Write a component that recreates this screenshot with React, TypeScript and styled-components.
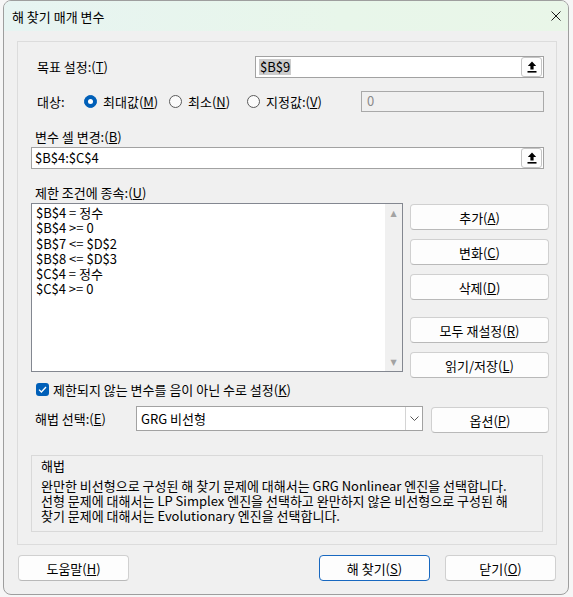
import React from 'react'
import styled, { createGlobalStyle } from 'styled-components'

const GlobalStyle = createGlobalStyle`
  html, body {
    margin: 0;
    padding: 0;
    background: #f6f6f6;
  }
  body {
    font-family: 'Noto Sans CJK KR', 'Noto Sans', sans-serif;
    font-size: 13px;
    color: #000;
  }
`

const constraints = ['$B$4 = 정수', '$B$4 >= 0', '$B$7 <= $D$2', '$B$8 <= $D$3', '$C$4 = 정수', '$C$4 >= 0']

function UpArrow() {
  return (
    <svg width='10' height='12' viewBox='0 0 10 12'>
      <path d='M5 0.5 L0.8 5 H3.4 V8.5 H6.6 V5 H9.2 Z' fill='#000' />
      <rect x='0.5' y='10' width='9' height='1.6' fill='#000' />
    </svg>
  )
}

function CloseIcon() {
  return (
    <svg width='10' height='10' viewBox='0 0 10 10'>
      <path d='M0.5 0.5 L9.5 9.5 M9.5 0.5 L0.5 9.5' stroke='#1a1a1a' strokeWidth='1' />
    </svg>
  )
}

function Chevron() {
  return (
    <svg width='9' height='5' viewBox='0 0 9 5'>
      <path d='M0.5 0.5 L4.5 4.5 L8.5 0.5' stroke='#555' strokeWidth='1' fill='none' />
    </svg>
  )
}

function Check() {
  return (
    <svg width='9' height='7' viewBox='0 0 9 7'>
      <path d='M1 3.6 L3.4 6 L8 1' stroke='#fff' strokeWidth='1.3' fill='none' />
    </svg>
  )
}

export default function App() {
  return (
    <>
      <GlobalStyle />
      <Window>
        <TitleBar>
          <Title>해 찾기 매개 변수</Title>
          <CloseButton>
            <CloseIcon />
          </CloseButton>
        </TitleBar>
        <Body>
          <Panel>
            <TargetRow>
              <TargetLabel>
                목표 설정:(<u>T</u>)
              </TargetLabel>
              <RefInput>
                <Selected>$B$9</Selected>
                <RefButton>
                  <UpArrow />
                </RefButton>
              </RefInput>
            </TargetRow>

            <ObjectiveRow>
              <ObjectiveLabel>대상:</ObjectiveLabel>
              <RadioOption $w={85}>
                <RadioDot $checked />
                <span>
                  최대값(<u>M</u>)
                </span>
              </RadioOption>
              <RadioOption $w={78}>
                <RadioDot />
                <span>
                  최소(<u>N</u>)
                </span>
              </RadioOption>
              <RadioOption $w={113}>
                <RadioDot />
                <span>
                  지정값:(<u>V</u>)
                </span>
              </RadioOption>
              <ValueInput>0</ValueInput>
            </ObjectiveRow>

            <FieldLabel $top={17}>
              변수 셀 변경:(<u>B</u>)
            </FieldLabel>
            <WideRow>
              <RefInput>
                <span>$B$4:$C$4</span>
                <RefButton>
                  <UpArrow />
                </RefButton>
              </RefInput>
            </WideRow>

            <FieldLabel $top={16}>
              제한 조건에 종속:(<u>U</u>)
            </FieldLabel>
            <ConstraintArea>
              <ListBox>
                <ListItems>
                  {constraints.map((c) => (
                    <ListItem key={c}>{c}</ListItem>
                  ))}
                </ListItems>
                <ScrollTrack>
                  <ScrollArrow>▲</ScrollArrow>
                  <ScrollArrow>▼</ScrollArrow>
                </ScrollTrack>
              </ListBox>
              <ButtonColumn>
                <Button $w={139}>
                  추가(<u>A</u>)
                </Button>
                <Button $w={139} $top={9}>
                  변화(<u>C</u>)
                </Button>
                <Button $w={139} $top={9}>
                  삭제(<u>D</u>)
                </Button>
                <Button $w={139} $top={17}>
                  모두 재설정(<u>R</u>)
                </Button>
                <Button $w={139} $top={9}>
                  읽기/저장(<u>L</u>)
                </Button>
              </ButtonColumn>
            </ConstraintArea>

            <CheckRow>
              <CheckBox>
                <Check />
              </CheckBox>
              <span>
                제한되지 않는 변수를 음이 아닌 수로 설정(<u>K</u>)
              </span>
            </CheckRow>

            <SolverRow>
              <SolverLabel>
                해법 선택:(<u>E</u>)
              </SolverLabel>
              <Select>
                <SelectText>GRG 비선형</SelectText>
                <SelectArrow>
                  <Chevron />
                </SelectArrow>
              </Select>
              <Button $w={118} $top={1}>
                옵션(<u>P</u>)
              </Button>
            </SolverRow>

            <GroupBox>
              <GroupTitle>해법</GroupTitle>
              <GroupText>
                <TextLine>완만한 비선형으로 구성된 해 찾기 문제에 대해서는 GRG Nonlinear 엔진을 선택합니다.</TextLine>
                <TextLine>선형 문제에 대해서는 LP Simplex 엔진을 선택하고 완만하지 않은 비선형으로 구성된 해</TextLine>
                <TextLine>찾기 문제에 대해서는 Evolutionary 엔진을 선택합니다.</TextLine>
              </GroupText>
            </GroupBox>
          </Panel>

          <Footer>
            <Button $w={111}>
              도움말(<u>H</u>)
            </Button>
            <Spacer />
            <Button $w={111} $primary>
              해 찾기(<u>S</u>)
            </Button>
            <Button $w={111}>
              닫기(<u>O</u>)
            </Button>
          </Footer>
        </Body>
      </Window>
    </>
  )
}

const Window = styled.div`
  margin-left: 3px;
  width: 566px;
  height: 595px;
  box-sizing: border-box;
  border: 1px solid #9e9e9e;
  border-radius: 8px;
  background: #f0f0f0;
  overflow: hidden;
  display: flex;
  flex-direction: column;
`

const TitleBar = styled.div`
  height: 30px;
  display: flex;
  align-items: center;
  padding: 0 7px 0 8px;
  background: linear-gradient(90deg, #e7f4f2, #e8f6ea 60%, #e9f6e8);
`

const Title = styled.div`
  flex: 1;
  line-height: 16px;
  margin-top: 1px;
`

const CloseButton = styled.div`
  width: 10px;
  height: 10px;
  display: flex;
`

const Body = styled.div`
  flex: 1;
  padding: 10px 0 0 13px;
  display: flex;
  flex-direction: column;
`

const Panel = styled.div`
  width: 540px;
  height: 504px;
  box-sizing: border-box;
  border: 1px solid #dcdcdc;
  padding: 14px 7px 0 13px;
  display: flex;
  flex-direction: column;
`

const TargetRow = styled.div`
  display: flex;
  height: 22px;
  margin-right: 5px;
`

const TargetLabel = styled.div`
  width: 224px;
  padding-left: 6px;
  box-sizing: border-box;
  line-height: 22px;
`

const RefInput = styled.div`
  flex: 1;
  height: 22px;
  box-sizing: border-box;
  border: 1px solid #a2a2a2;
  background: #fff;
  display: flex;
  align-items: center;
  padding: 0 1px 0 3px;
  line-height: 16px;

  & > span {
    flex: 1;
  }
`

const Selected = styled.span`
  flex: 0 0 auto !important;
  margin-right: auto;
  background: #cccccc;
  padding: 0 1px;
`

const RefButton = styled.div`
  width: 21px;
  height: 20px;
  box-sizing: border-box;
  border: 1px solid #c4c4c4;
  border-radius: 3px;
  background: #fdfdfd;
  display: flex;
  align-items: center;
  justify-content: center;
  margin-left: auto;
`

const ObjectiveRow = styled.div`
  display: flex;
  align-items: center;
  height: 21px;
  margin-top: 13px;
  margin-right: 5px;
`

const ObjectiveLabel = styled.div`
  width: 53px;
  padding-left: 6px;
  box-sizing: border-box;
`

const RadioOption = styled.label<{ $w: number }>`
  width: ${(p) => p.$w}px;
  display: flex;
  align-items: center;
  gap: 6px;
  white-space: nowrap;
`

const RadioDot = styled.span<{ $checked?: boolean }>`
  width: 13px;
  height: 13px;
  box-sizing: border-box;
  border-radius: 50%;
  flex: 0 0 auto;
  position: relative;
  border: 1px solid ${(p) => (p.$checked ? '#005fb8' : '#5a5a5a')};
  background: ${(p) => (p.$checked ? '#005fb8' : '#fbfbfb')};

  &::after {
    content: '';
    display: ${(p) => (p.$checked ? 'block' : 'none')};
    position: absolute;
    left: 3px;
    top: 3px;
    width: 5px;
    height: 5px;
    border-radius: 50%;
    background: #fff;
  }
`

const ValueInput = styled.div`
  margin-left: auto;
  width: 183px;
  height: 21px;
  box-sizing: border-box;
  border: 1px solid #a9a9a9;
  background: #f0f0f0;
  color: #8a8a8a;
  padding-left: 5px;
  line-height: 18px;
`

const FieldLabel = styled.div<{ $top: number }>`
  margin-top: ${(p) => p.$top}px;
  line-height: 16px;
  padding-left: 4px;
`

const WideRow = styled.div`
  display: flex;
  margin-top: 2px;
  margin-right: 5px;
`

const ConstraintArea = styled.div`
  display: flex;
  align-items: flex-start;
  gap: 7px;
  margin-top: 2px;
`

const ListBox = styled.div`
  width: 372px;
  height: 169px;
  box-sizing: border-box;
  border: 1px solid #838790;
  background: #fff;
  display: flex;
`

const ListItems = styled.div`
  flex: 1;
  padding: 1px 4px;
`

const ListItem = styled.div`
  line-height: 15.3px;
  white-space: nowrap;
`

const ScrollTrack = styled.div`
  width: 17px;
  background: #f0f0f0;
  display: flex;
  flex-direction: column;
  justify-content: space-between;
  align-items: center;
  padding: 5px 0 3px;
`

const ScrollArrow = styled.span`
  font-family: 'DejaVu Sans', sans-serif;
  font-size: 8px;
  line-height: 10px;
  color: #a3a3a3;
`

const ButtonColumn = styled.div`
  display: flex;
  flex-direction: column;
  margin-top: 1px;
`

const Button = styled.div<{ $w: number; $top?: number; $primary?: boolean }>`
  width: ${(p) => p.$w}px;
  height: 26px;
  margin-top: ${(p) => p.$top ?? 0}px;
  box-sizing: border-box;
  border: 1px solid ${(p) => (p.$primary ? '#1868c0' : '#d0d0d0')};
  border-bottom-color: ${(p) => (p.$primary ? '#1868c0' : '#b9b9b9')};
  border-radius: 4px;
  background: #fdfdfd;
  display: flex;
  align-items: center;
  justify-content: center;
  white-space: nowrap;
  flex: 0 0 auto;
`

const CheckRow = styled.div`
  display: flex;
  align-items: center;
  height: 16px;
  margin-top: 3px;
  padding-left: 5px;
  gap: 4px;
  white-space: nowrap;
`

const CheckBox = styled.span`
  width: 13px;
  height: 13px;
  border-radius: 3px;
  background: #005fb8;
  display: flex;
  align-items: center;
  justify-content: center;
`

const SolverRow = styled.div`
  display: flex;
  align-items: flex-start;
  margin-top: 9px;
  gap: 8px;
`

const SolverLabel = styled.div`
  width: 97px;
  padding-left: 4px;
  box-sizing: border-box;
  line-height: 25px;
`

const Select = styled.div`
  width: 287px;
  height: 25px;
  box-sizing: border-box;
  border: 1px solid #a2a2a2;
  background: #fff;
  display: flex;
`

const SelectText = styled.div`
  flex: 1;
  padding-left: 4px;
  line-height: 23px;
`

const SelectArrow = styled.div`
  width: 16px;
  border-left: 1px solid #d4d4d4;
  display: flex;
  align-items: center;
  justify-content: center;
`

const GroupBox = styled.div`
  width: 512px;
  height: 77px;
  box-sizing: border-box;
  margin-top: 22px;
  border: 1px solid #d9d9d9;
  padding: 2px 9px 0;
`

const GroupTitle = styled.div`
  line-height: 16px;
`

const GroupText = styled.div`
  margin-top: 4px;
`

const TextLine = styled.div`
  line-height: 15px;
  white-space: nowrap;
`

const Footer = styled.div`
  display: flex;
  margin-top: 10px;
  padding-left: 1px;
  width: 538px;
  gap: 15px;
`

const Spacer = styled.div`
  flex: 1;
`
